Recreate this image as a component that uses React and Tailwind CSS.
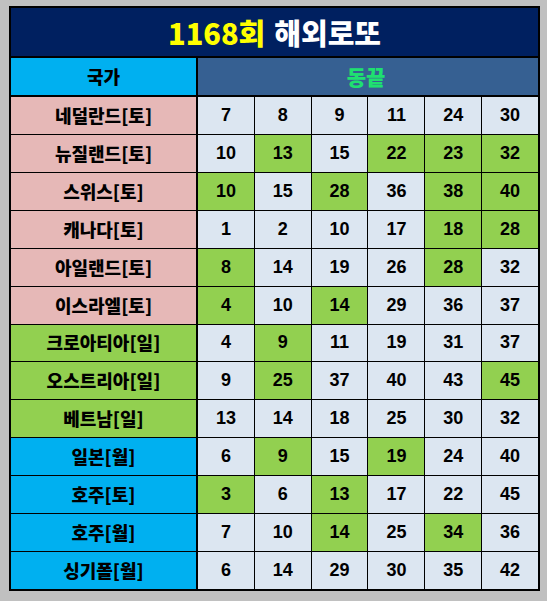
const rows = [
  { name: "네덜란드[토]", tone: "pink", nums: [7, 8, 9, 11, 24, 30], hit: [] },
  { name: "뉴질랜드[토]", tone: "pink", nums: [10, 13, 15, 22, 23, 32], hit: [13, 22, 23, 32] },
  { name: "스위스[토]", tone: "pink", nums: [10, 15, 28, 36, 38, 40], hit: [10, 28, 38, 40] },
  { name: "캐나다[토]", tone: "pink", nums: [1, 2, 10, 17, 18, 28], hit: [18, 28] },
  { name: "아일랜드[토]", tone: "pink", nums: [8, 14, 19, 26, 28, 32], hit: [8, 28] },
  { name: "이스라엘[토]", tone: "pink", nums: [4, 10, 14, 29, 36, 37], hit: [4, 14] },
  { name: "크로아티아[일]", tone: "green", nums: [4, 9, 11, 19, 31, 37], hit: [9] },
  { name: "오스트리아[일]", tone: "green", nums: [9, 25, 37, 40, 43, 45], hit: [25, 45] },
  { name: "베트남[일]", tone: "green", nums: [13, 14, 18, 25, 30, 32], hit: [] },
  { name: "일본[월]", tone: "cyan", nums: [6, 9, 15, 19, 24, 40], hit: [9, 19] },
  { name: "호주[토]", tone: "cyan", nums: [3, 6, 13, 17, 22, 45], hit: [3, 13] },
  { name: "호주[월]", tone: "cyan", nums: [7, 10, 14, 25, 34, 36], hit: [14, 34] },
  { name: "싱기폴[월]", tone: "cyan", nums: [6, 14, 29, 30, 35, 42], hit: [] },
];

const toneBg = {
  pink: "bg-[#e6b8b7]",
  green: "bg-[#92d050]",
  cyan: "bg-[#00b0f0]",
};

const kr = { fontFamily: '"Noto Sans CJK KR", "Noto Sans", sans-serif' };
const num = { fontFamily: '"Liberation Sans", Arial, sans-serif' };

export default function App() {
  return (
    <div className="min-h-screen bg-[#c0c0c0] pt-[6px] pl-[9px]">
      <div className="w-[531px] h-[585px] border-2 border-black bg-black flex flex-col">
        {/* title */}
        <div
          className="h-[48px] bg-[#002060] flex items-center justify-center text-[29px] font-black leading-none"
          style={kr}
        >
          <span className="text-[#ffff00]">1168회</span>
          <span className="text-white ml-[9px]">해외로또</span>
        </div>

        {/* header */}
        <div className="mt-[2px] h-[37px] flex">
          <div
            className="w-[185px] bg-[#00b0f0] flex items-center justify-center text-[18px] font-black text-black"
            style={kr}
          >
            국가
          </div>
          <div
            className="ml-[2px] flex-1 bg-[#366092] flex items-center justify-center text-[21px] font-black text-[#1fe070] pr-[4px]"
            style={kr}
          >
            동끝
          </div>
        </div>

        {/* rows */}
        <div className="mt-[2px] flex-1 flex flex-col gap-px">
          {rows.map((r) => (
            <div key={r.name} className="flex-1 flex">
              <div
                className={`w-[185px] ${toneBg[r.tone]} flex items-center justify-center text-[18px] font-black text-black`}
                style={kr}
              >
                {r.name}
              </div>
              <div className="ml-[2px] flex-1 grid grid-cols-6 gap-px">
                {r.nums.map((n, i) => (
                  <div
                    key={i}
                    className={`${r.hit.includes(n) ? "bg-[#92d050]" : "bg-[#dce6f1]"} flex items-center justify-center text-[18px] font-bold text-black`}
                    style={num}
                  >
                    {n}
                  </div>
                ))}
              </div>
            </div>
          ))}
        </div>
      </div>
    </div>
  );
}
